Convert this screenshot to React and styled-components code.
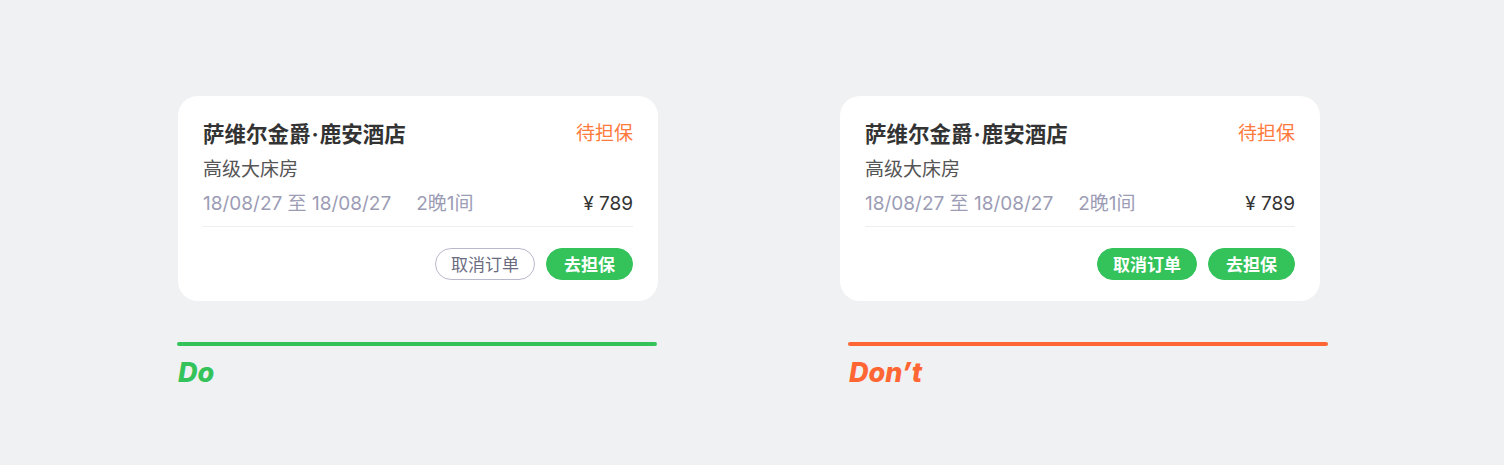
import React from "react";
import styled, { createGlobalStyle } from "styled-components";

const GlobalStyle = createGlobalStyle`
  html, body {
    margin: 0;
    padding: 0;
    background: #f0f1f3;
  }
  body {
    font-family: Inter, "Noto Sans CJK SC", sans-serif;
    -webkit-font-smoothing: antialiased;
  }
`;

const Page = styled.div`
  width: 1504px;
  height: 465px;
  box-sizing: border-box;
  padding: 96px 0 0 177px;
  display: flex;
  gap: 183px;
  background: #f0f1f3;
`;

const Column = styled.div`
  width: 480px;
  display: flex;
  flex-direction: column;
`;

const Card = styled.div`
  width: 480px;
  box-sizing: border-box;
  margin-left: ${(p) => p.$shift}px;
  background: #ffffff;
  border-radius: 20px;
  padding: 24px 25px 21px;
  display: flex;
  flex-direction: column;
`;

const Row = styled.div`
  display: flex;
  justify-content: space-between;
  align-items: center;
  margin-top: ${(p) => p.$mt || 0}px;
`;

const Title = styled.div`
  font-size: 21.5px;
  line-height: 28px;
  font-weight: 700;
  color: #333333;
`;

const Dot = styled.span`
  margin: 0 1px;
`;

const Status = styled.div`
  font-size: 19px;
  line-height: 28px;
  color: #ff7a3d;
`;

const Room = styled.div`
  margin-top: 8px;
  font-size: 19px;
  line-height: 27px;
  color: #555555;
`;

const Meta = styled.div`
  font-size: 19px;
  line-height: 26px;
  color: #9c9cb5;
  display: flex;
  gap: 25px;
`;

const Price = styled.div`
  font-size: 19px;
  line-height: 26px;
  color: #333333;
`;

const Divider = styled.div`
  height: 1px;
  background: #eeeeef;
  margin-top: 9px;
`;

const Actions = styled.div`
  display: flex;
  justify-content: flex-end;
  gap: 11px;
  margin-top: 21px;
`;

const Button = styled.button`
  height: 32px;
  box-sizing: border-box;
  padding: 0 ${(p) => p.$pad}px;
  border-radius: 16px;
  font-family: "Noto Sans CJK SC", sans-serif;
  font-size: 17px;
  line-height: 30px;
  font-weight: ${(p) => (p.$primary ? 600 : 400)};
  border: 1px solid ${(p) => (p.$primary ? "#34c35b" : "#b9b9cc")};
  background: ${(p) => (p.$primary ? "#34c35b" : "#ffffff")};
  color: ${(p) => (p.$primary ? "#ffffff" : "#6b6b80")};
  cursor: pointer;
`;

const Bar = styled.div`
  margin-top: 41px;
  margin-left: ${(p) => p.$shift}px;
  width: 480px;
  height: 4px;
  border-radius: 2px;
  background: ${(p) => p.$color};
`;

const Verdict = styled.div`
  margin-top: 10px;
  margin-left: ${(p) => p.$shift}px;
  font-family: Inter, "Liberation Sans", sans-serif;
  font-style: italic;
  font-weight: 800;
  font-size: 27px;
  line-height: 34px;
  color: ${(p) => p.$color};
`;

function OrderCard({ shift, badCancel }) {
  return (
    <Card $shift={shift}>
      <Row>
        <Title>
          萨维尔金爵<Dot>·</Dot>鹿安酒店
        </Title>
        <Status>待担保</Status>
      </Row>
      <Room>高级大床房</Room>
      <Row $mt={8}>
        <Meta>
          <span>18/08/27 至 18/08/27</span>
          <span>2晚1间</span>
        </Meta>
        <Price>¥ 789</Price>
      </Row>
      <Divider />
      <Actions>
        <Button $pad={15} $primary={badCancel}>
          取消订单
        </Button>
        <Button $pad={17} $primary>
          去担保
        </Button>
      </Actions>
    </Card>
  );
}

export default function App() {
  return (
    <>
      <GlobalStyle />
      <Page>
        <Column>
          <OrderCard shift={1} />
          <Bar $color="#34c35b" $shift={0} />
          <Verdict $color="#34c35b" $shift={1}>
            Do
          </Verdict>
        </Column>
        <Column>
          <OrderCard shift={0} badCancel />
          <Bar $color="#ff6633" $shift={8} />
          <Verdict $color="#ff6633" $shift={9}>
            Don’t
          </Verdict>
        </Column>
      </Page>
    </>
  );
}
